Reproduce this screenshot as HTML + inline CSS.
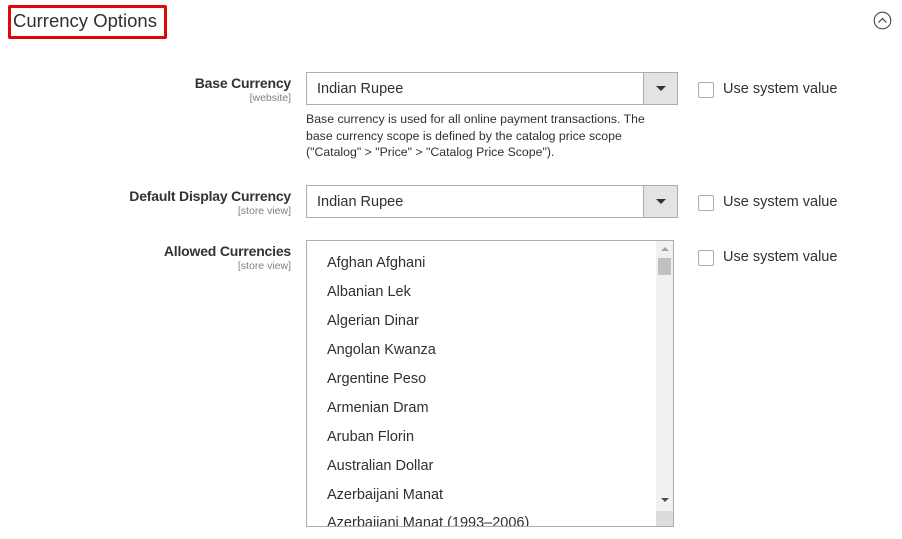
<!DOCTYPE html>
<html><head><meta charset="utf-8"><style>
*{margin:0;padding:0;box-sizing:border-box}
body{width:902px;height:539px;background:#fff;font-family:"Liberation Sans",sans-serif;color:#303030;position:relative;overflow:hidden}
.a{position:absolute;white-space:nowrap}
.lbl{font-size:14px;font-weight:bold;color:#333;text-align:right;right:611px;letter-spacing:-0.2px}
.scope{font-size:10.5px;color:#808080;text-align:right;right:611px}
.sel{position:absolute;left:306px;width:372px;height:33px;border:1px solid #adadad;font-size:14.5px;padding:8px 0 0 10px;color:#303030}
.sel .btn{position:absolute;right:0;top:0;width:34px;height:31px;background:#e3e3e3;border-left:1px solid #adadad}
.sel .btn:after{content:"";position:absolute;left:12px;top:13px;border-left:5px solid transparent;border-right:5px solid transparent;border-top:5px solid #333}
.cb{position:absolute;left:698px;width:16px;height:16px;border:1px solid #adadad;border-radius:2px}
.cbl{font-size:14.5px;color:#303030;left:723px}
.list{position:absolute;left:306px;top:240px;width:368px;height:287px;border:1px solid #adadad;overflow:hidden}
.list div{position:absolute;left:20px;font-size:14.5px;color:#303030}
</style></head><body>
<div class="a" style="left:8px;top:5px;width:159px;height:34px;border:3px solid #e0060b;border-radius:2px"></div>
<div class="a" style="left:13px;top:10px;font-size:18.5px;color:#303030">Currency Options</div>
<svg class="a" style="left:873px;top:11px" width="19" height="19"><circle cx="9.5" cy="9.5" r="8.3" fill="none" stroke="#444" stroke-width="1.1"/><path d="M5.5 11.5 L9.5 7.5 L13.5 11.5" fill="none" stroke="#444" stroke-width="1.2"/></svg>

<div class="a lbl" style="top:75px">Base Currency</div>
<div class="a scope" style="top:92px">[website]</div>
<div class="sel" style="top:72px">Indian Rupee<div class="btn"></div></div>
<div class="cb" style="top:82px"></div>
<div class="a cbl" style="top:81px">Use system value</div>
<div class="a" style="left:306px;top:111px;font-size:12.3px;line-height:16.5px;color:#303030">Base currency is used for all online payment transactions. The<br>base currency scope is defined by the catalog price scope<br>("Catalog" &gt; "Price" &gt; "Catalog Price Scope").</div>

<div class="a lbl" style="top:188px">Default Display Currency</div>
<div class="a scope" style="top:205px">[store view]</div>
<div class="sel" style="top:185px">Indian Rupee<div class="btn"></div></div>
<div class="cb" style="top:195px"></div>
<div class="a cbl" style="top:194px">Use system value</div>

<div class="a lbl" style="top:243px">Allowed Currencies</div>
<div class="a scope" style="top:260px">[store view]</div>
<div class="cb" style="top:250px"></div>
<div class="a cbl" style="top:249px">Use system value</div>
<div class="list">
<div style="top:14px">Afghan Afghani</div>
<div style="top:43px">Albanian Lek</div>
<div style="top:72px">Algerian Dinar</div>
<div style="top:101px">Angolan Kwanza</div>
<div style="top:130px">Argentine Peso</div>
<div style="top:159px">Armenian Dram</div>
<div style="top:188px">Aruban Florin</div>
<div style="top:217px">Australian Dollar</div>
<div style="top:246px">Azerbaijani Manat</div>
<div style="top:274px">Azerbaijani Manat (1993–2006)</div>
<span style="position:absolute;left:349px;top:0;width:17px;height:285px;background:#f1f1f1"></span>
<span style="position:absolute;left:351px;top:17px;width:13px;height:17px;background:#c1c1c1"></span>
<span style="position:absolute;left:354px;top:6px;border-left:4px solid transparent;border-right:4px solid transparent;border-bottom:4px solid #a3a3a3"></span>
<span style="position:absolute;left:354px;top:257px;border-left:4px solid transparent;border-right:4px solid transparent;border-top:4px solid #505050"></span>
<span style="position:absolute;left:349px;top:270px;width:17px;height:15px;background:#dcdcdc"></span>
</div>
</body></html>
